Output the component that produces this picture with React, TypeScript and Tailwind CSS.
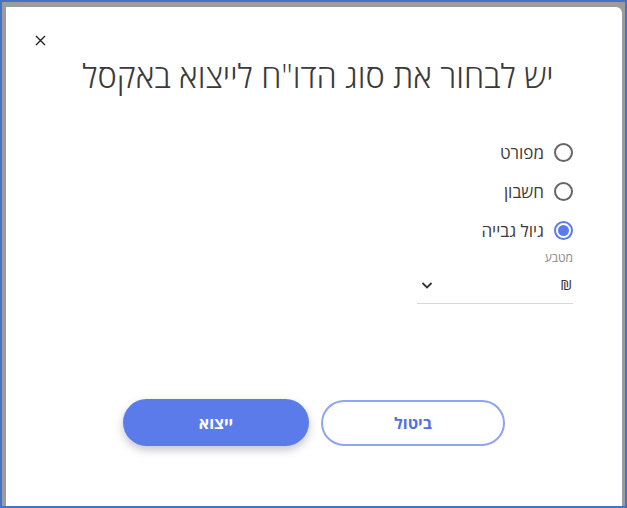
import React from "react";

function Radio({ label, checked }: { label: string; checked?: boolean }) {
  return (
    <div className="flex items-center gap-[10px] h-[39px]">
      <span
        className={
          "w-[19px] h-[19px] rounded-full border-2 flex items-center justify-center " +
          (checked ? "border-[#5b7bea]" : "border-[#666]")
        }
      >
        {checked && <span className="w-[11px] h-[11px] rounded-full bg-[#5b7bea]" />}
      </span>
      <span className="text-[17px] text-[#3c3c3c]">{label}</span>
    </div>
  );
}

export default function App() {
  return (
    <div
      className="w-[627px] h-[508px] border-2 border-[#4472c4] bg-[#9c9ca0] pt-[5px] pl-[4px] pr-[3px] flex"
      style={{ fontFamily: '"Open Sans", "Liberation Sans", sans-serif' }}
    >
      <div className="flex-1 bg-white rounded-tr-[6px] flex flex-col relative" dir="rtl">
        <button className="absolute left-[27px] top-[26px] w-[14px] h-[14px] flex items-center justify-center text-[#222]">
          <svg width="11" height="11" viewBox="0 0 11 11">
            <path d="M1 1L10 10M10 1L1 10" stroke="#222" strokeWidth="1.4" />
          </svg>
        </button>
        <h1 className="mt-[48px] text-center text-[32.5px] font-light text-[#3a3a3a] leading-[42px] pl-[8px]">
          יש לבחור את סוג הדו"ח לייצוא באקסל
        </h1>
        <div className="mt-[36px] pr-[49px] flex flex-col items-start">
          <Radio label="מפורט" />
          <Radio label="חשבון" />
          <Radio label="גיול גבייה" checked />
          <div className="w-[156px] mt-[0px]">
            <div className="text-[12px] text-[#888] leading-[16px]">מטבע</div>
            <div className="flex items-center justify-between h-[38px] border-b border-[#d8d8d8]">
              <span className="text-[15px] text-[#333] pr-[1px]">₪</span>
              <svg width="14" height="14" viewBox="0 0 14 14" className="ml-[3px]">
                <path d="M2.5 5L7 9.5L11.5 5" stroke="#333" strokeWidth="1.8" fill="none" />
              </svg>
            </div>
          </div>
        </div>
        <div className="mt-[95px] flex justify-center items-start gap-[12px]">
          <button className="mt-[1px] w-[184px] h-[46px] rounded-full border-2 border-[#8fa4f2] text-[#5570e0] text-[16px] font-bold bg-white">
            ביטול
          </button>
          <button className="w-[186px] h-[47px] rounded-full bg-[#5b7bea] text-white text-[16px] font-bold shadow-[0_4px_8px_rgba(60,60,90,0.3)]">
            ייצוא
          </button>
        </div>
      </div>
    </div>
  );
}
